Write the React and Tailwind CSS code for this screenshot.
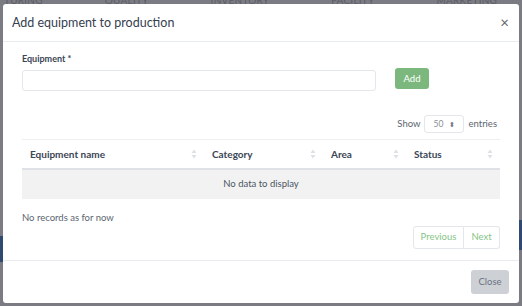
import React, { useState } from "react";

const SortIcon = () => (
  <svg width="6" height="10" viewBox="0 0 6 10" className="shrink-0">
    <path d="M3 0.5 L5.5 4 H0.5 Z" fill="#dde0e4" />
    <path d="M3 9.5 L5.5 6 H0.5 Z" fill="#dde0e4" />
  </svg>
);

const App = () => {
  const [equipment, setEquipment] = useState("");
  const cols = [
    { name: "Equipment name", w: "w-[182px]" },
    { name: "Category", w: "w-[119px]" },
    { name: "Area", w: "w-[83px]" },
    { name: "Status", w: "flex-1" },
  ];

  return (
    <div
      className="w-[522px] h-[306px] bg-[#7b7b83] relative overflow-hidden"
      style={{ fontFamily: "Lato, 'Open Sans', 'Liberation Sans', sans-serif" }}
    >
      {/* page behind the overlay */}
      <div className="absolute top-[-7px] left-0 flex gap-[62px] text-[10px] text-[#5c5d66] tracking-wide pl-[4px]">
        <span>TURING</span>
        <span>QUALITY</span>
        <span>INVENTORY</span>
        <span>FACILITY</span>
        <span>MARKETING</span>
      </div>
      <div className="absolute left-0 top-[236px] w-[3px] h-[26px] bg-[#2f4a6e]" />
      <div className="absolute right-0 top-[220px] w-[3px] h-[30px] bg-[#2f4a6e]" />

      <div className="absolute left-[3px] top-[4px] w-[516px] h-[299px] bg-white rounded-[3px] flex flex-col">
        {/* header */}
        <div className="h-[38px] shrink-0 flex items-center justify-between pl-[9px] pr-[10px] border-b border-[#e9ecef]">
          <h2 className="text-[12.5px] leading-[18px] text-[#36404f] font-normal">Add equipment to production</h2>
          <button className="text-[#666] text-[15px] leading-none">×</button>
        </div>

        {/* body */}
        <div className="px-[19px] pt-[11px] flex-1">
          <label className="block text-[9px] leading-[12px] font-bold text-[#3a4555]">
            Equipment <span>*</span>
          </label>
          <div className="flex items-start mt-[3px]">
            <input
              value={equipment}
              onChange={(e) => setEquipment(e.target.value)}
              className="w-[354px] h-[21px] mt-[2px] border border-[#e3e6ea] rounded-[3px] outline-none"
            />
            <button className="ml-[19px] w-[34px] h-[21px] bg-[#7cb87e] text-white text-[9.5px] leading-none rounded-[3px]">
              Add
            </button>
          </div>

          <div className="flex items-center justify-end mt-[24px] text-[9.5px] leading-[12px] text-[#5c6570] pr-[3px]">
            <span>Show</span>
            <div className="ml-[4px] w-[40px] h-[18px] border border-[#e3e6ea] rounded-[3px] flex items-center justify-between px-[8px] text-[8.5px] text-[#8a9098]">
              <span>50</span>
              <span className="text-[7px] text-[#6b7280]">⬍</span>
            </div>
            <span className="ml-[4px]">entries</span>
          </div>

          <div className="mt-[6px] border-t border-[#eceef0]">
            <div className="h-[30px] flex items-center border-b-2 border-[#dee2e6] text-[10px] font-bold text-[#3a4555]">
              {cols.map((c) => (
                <div key={c.name} className={`${c.w} flex items-center justify-between pl-[8px] pr-[7px]`}>
                  <span>{c.name}</span>
                  <SortIcon />
                </div>
              ))}
            </div>
            <div className="h-[29px] bg-[#f2f2f2] flex items-center justify-center text-[9.5px] text-[#4b5563]">
              No data to display
            </div>
          </div>

          <div className="flex justify-between items-start mt-[13px]">
            <span className="text-[9.5px] leading-[12px] text-[#5c6570]">No records as for now</span>
            <div className="flex mt-[14px] text-[9.5px] text-[#86c486]">
              <span className="w-[51px] h-[23px] border border-[#e3e6ea] rounded-l-[3px] flex items-center justify-center">Previous</span>
              <span className="w-[36px] h-[23px] border border-l-0 border-[#e3e6ea] rounded-r-[3px] flex items-center justify-center">Next</span>
            </div>
          </div>
        </div>

        {/* footer */}
        <div className="h-[43px] shrink-0 border-t border-[#e9ecef] flex items-center justify-end pr-[10px]">
          <button className="w-[38px] h-[24px] bg-[#cdd1d6] text-[#6b7280] text-[9.5px] rounded-[3px]">
            Close
          </button>
        </div>
      </div>
    </div>
  );
};

export default App;
